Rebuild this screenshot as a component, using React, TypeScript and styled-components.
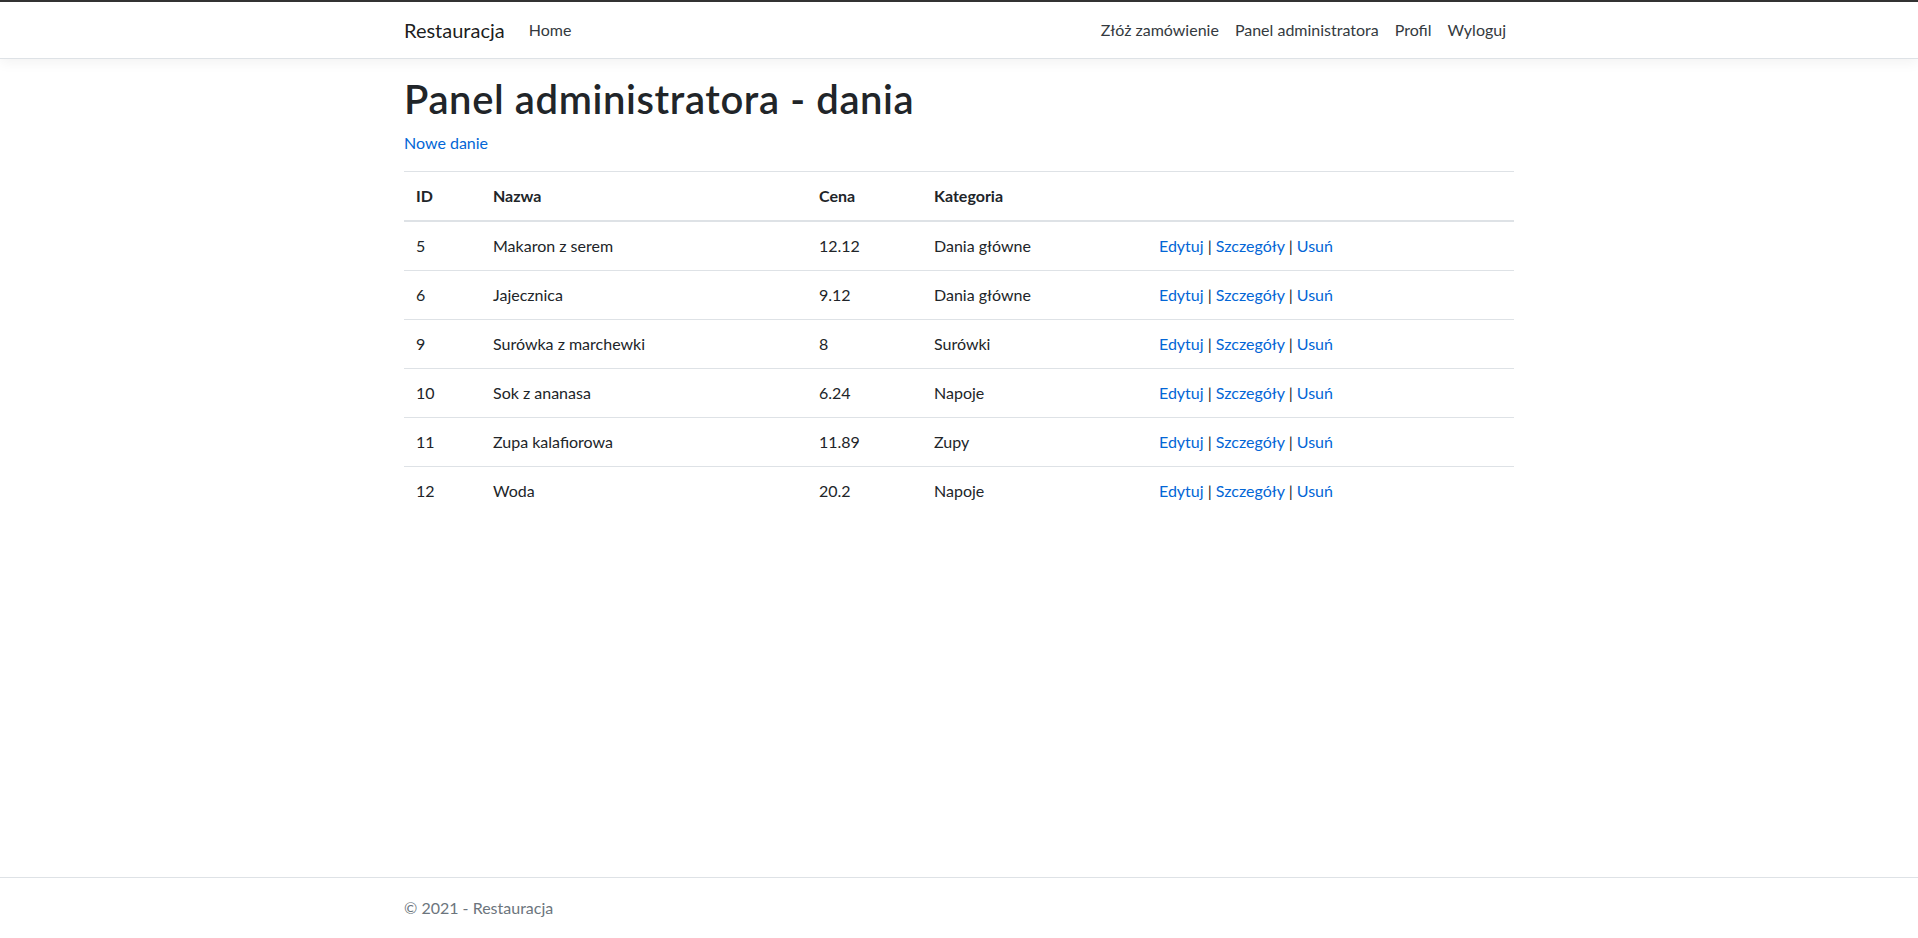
import React from "react";
import styled, { createGlobalStyle } from "styled-components";

const GlobalStyle = createGlobalStyle`
  *, *::before, *::after { box-sizing: border-box; }
  html, body { margin: 0; padding: 0; }
  body {
    font-family: Lato, "Open Sans", "Liberation Sans", sans-serif;
    font-size: 16px;
    line-height: 1.5;
    color: #212529;
    background: #fff;
  }
`;

const Page = styled.div`
  min-height: 100vh;
  display: flex;
  flex-direction: column;
  border-top: 2px solid #333;
`;

const NavBar = styled.nav`
  background: #fff;
  border-bottom: 1px solid #dee2e6;
  box-shadow: 0 0.25rem 0.75rem rgba(0, 0, 0, 0.05);
  padding: 8px 0;
  margin-bottom: 16px;
`;

const Container = styled.div`
  width: 1140px;
  margin: 0 auto;
  padding: 0 15px;
`;

const NavInner = styled(Container)`
  display: flex;
  align-items: center;
`;

const Brand = styled.a`
  font-size: 20px;
  line-height: 30px;
  padding: 5px 0;
  margin-right: 16px;
  color: rgba(0, 0, 0, 0.9);
  text-decoration: none;
  white-space: nowrap;
`;

const NavList = styled.div<{ $end?: boolean }>`
  display: flex;
  flex-grow: ${(p) => (p.$end ? 0 : 1)};
`;

const NavLink = styled.a`
  padding: 8px;
  color: #343a40;
  text-decoration: none;
  white-space: nowrap;
`;

const Main = styled.main`
  padding-bottom: 16px;
`;

const Title = styled.h1`
  margin: 0 0 8px;
  font-size: 40px;
  font-weight: 600;
  line-height: 1.2;
  letter-spacing: 0.6px;
  color: #212529;
`;

const Para = styled.p`
  margin: 0 0 16px;
`;

const Link = styled.a`
  color: #0366d6;
  text-decoration: none;
`;

const Table = styled.table`
  width: 100%;
  border-collapse: collapse;
  color: #212529;
`;

const Th = styled.th<{ $w?: number }>`
  width: ${(p) => (p.$w ? `${p.$w}px` : "auto")};
  padding: 12px;
  text-align: left;
  font-weight: 700;
  vertical-align: bottom;
  border-top: 1px solid #dee2e6;
  border-bottom: 2px solid #dee2e6;
`;

const Td = styled.td`
  padding: 12px;
  vertical-align: top;
  border-top: 1px solid #dee2e6;
`;

const Footer = styled.footer`
  margin-top: auto;
  border-top: 1px solid #dee2e6;
  line-height: 60px;
  color: #6c757d;
  white-space: nowrap;
`;

const dishes = [
  { id: 5, name: "Makaron z serem", price: "12.12", cat: "Dania główne" },
  { id: 6, name: "Jajecznica", price: "9.12", cat: "Dania główne" },
  { id: 9, name: "Surówka z marchewki", price: "8", cat: "Surówki" },
  { id: 10, name: "Sok z ananasa", price: "6.24", cat: "Napoje" },
  { id: 11, name: "Zupa kalafiorowa", price: "11.89", cat: "Zupy" },
  { id: 12, name: "Woda", price: "20.2", cat: "Napoje" },
];

export default function App() {
  return (
    <>
      <GlobalStyle />
      <Page>
        <NavBar>
          <NavInner>
            <Brand href="#">Restauracja</Brand>
            <NavList>
              <NavLink href="#">Home</NavLink>
            </NavList>
            <NavList $end>
              <NavLink href="#">Złóż zamówienie</NavLink>
              <NavLink href="#">Panel administratora</NavLink>
              <NavLink href="#">Profil</NavLink>
              <NavLink href="#">Wyloguj</NavLink>
            </NavList>
          </NavInner>
        </NavBar>
        <Container>
          <Main>
            <Title>Panel administratora - dania</Title>
            <Para>
              <Link href="#">Nowe danie</Link>
            </Para>
            <Table>
              <thead>
                <tr>
                  <Th $w={77}>ID</Th>
                  <Th $w={326}>Nazwa</Th>
                  <Th $w={115}>Cena</Th>
                  <Th $w={225}>Kategoria</Th>
                  <Th></Th>
                </tr>
              </thead>
              <tbody>
                {dishes.map((d) => (
                  <tr key={d.id}>
                    <Td>{d.id}</Td>
                    <Td>{d.name}</Td>
                    <Td>{d.price}</Td>
                    <Td>{d.cat}</Td>
                    <Td>
                      <Link href="#">Edytuj</Link> |{" "}
                      <Link href="#">Szczegóły</Link> |{" "}
                      <Link href="#">Usuń</Link>
                    </Td>
                  </tr>
                ))}
              </tbody>
            </Table>
          </Main>
        </Container>
        <Footer>
          <Container>© 2021 - Restauracja</Container>
        </Footer>
      </Page>
    </>
  );
}
